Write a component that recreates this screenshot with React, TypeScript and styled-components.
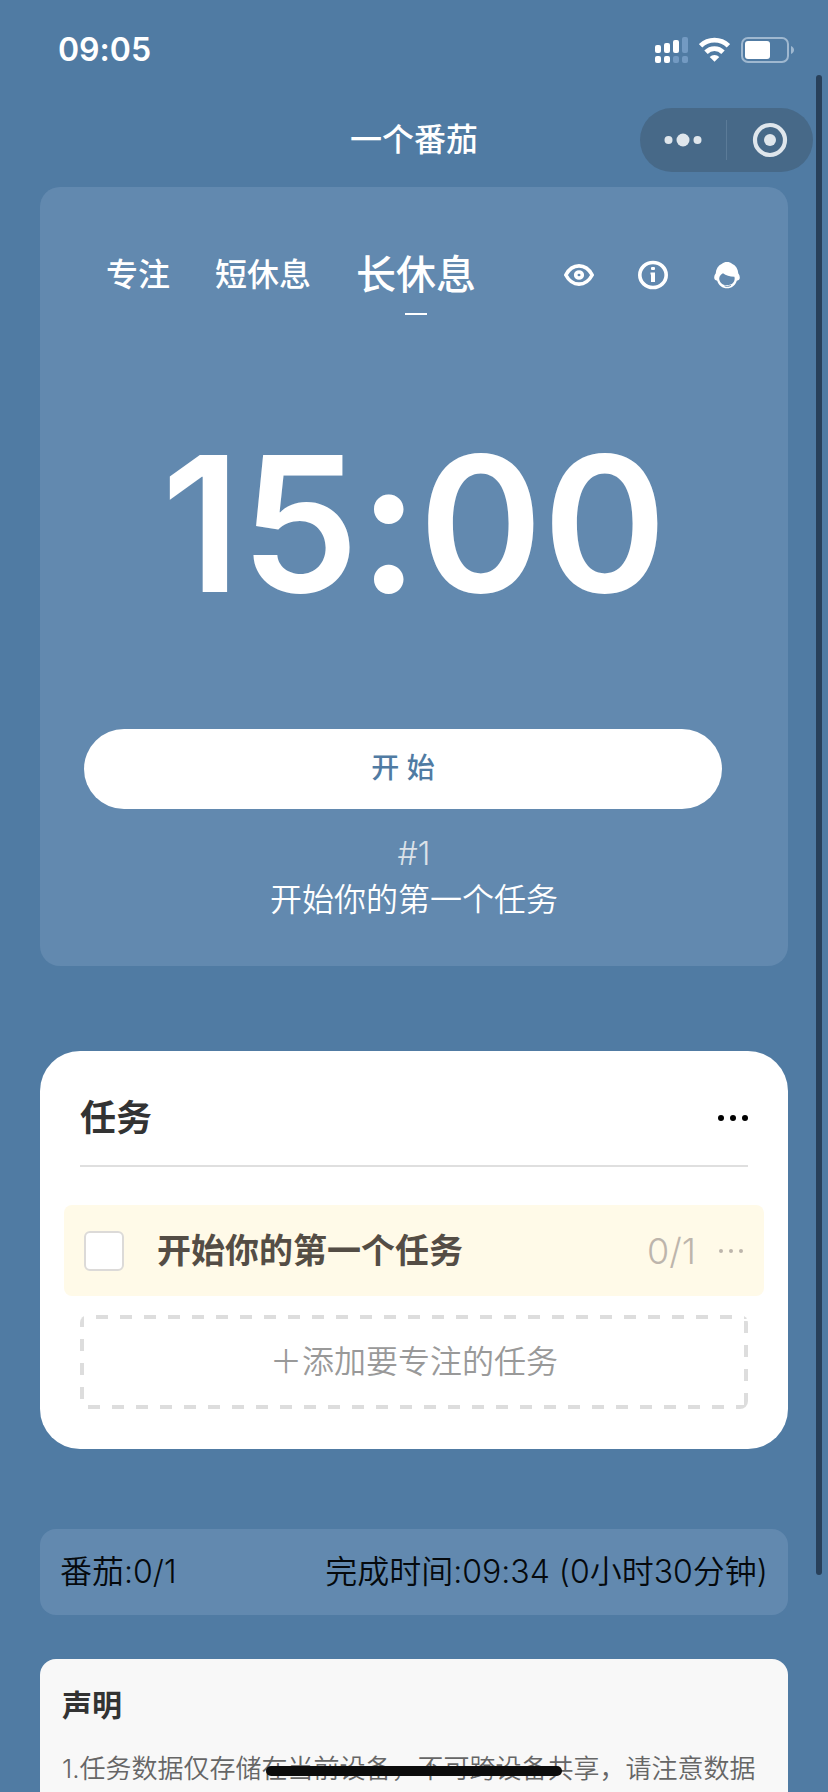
import React, { useState } from "react";
import styled, { createGlobalStyle } from "styled-components";

const GlobalStyle = createGlobalStyle`
  * { box-sizing: border-box; }
  html { scrollbar-width: none; }
  body {
    margin: 0;
    background: #507ba3;
    color: #ffffff;
    font-family: Inter, "Noto Sans CJK SC", sans-serif;
    font-size: 32px;
    font-feature-settings: "calt" 0;
    line-height: 48px;
  }
  button {
    padding: 0;
    border: 0;
    background: none;
    color: inherit;
    font: inherit;
    cursor: pointer;
  }
  h1, h2, p { margin: 0; }
  svg { display: block; }
`;

const Screen = styled.div`
  position: relative;
  height: 100vh;
  overflow: hidden;
`;

const StatusBar = styled.div`
  display: flex;
  justify-content: space-between;
  align-items: center;
  height: 100px;
  padding: 0 34px 0 58px;
`;

const Clock = styled.time`
  font-weight: 600;
`;

const StatusIcons = styled.div`
  display: flex;
  align-items: center;
  gap: 10px;
`;

const NavBar = styled.header`
  display: grid;
  grid-template-columns: 1fr auto 1fr;
  align-items: center;
  height: 80px;
  padding: 0 15px;
`;

const NavTitle = styled.h1`
  grid-column: 2;
  font-size: 32px;
  font-weight: 500;
`;

const Capsule = styled.div`
  display: flex;
  align-items: center;
  justify-self: end;
  width: 173px;
  height: 64px;
  border-radius: 32px;
  background: #476988;
`;

const CapsuleButton = styled.button`
  display: flex;
  flex: 1;
  align-items: center;
  justify-content: center;
  height: 40px;
  & + & { border-left: 1px solid #5b7b98; }
`;

const Content = styled.main`
  display: flex;
  flex-direction: column;
  padding: 7px 40px 0;
`;

const TimerCard = styled.section`
  padding: 48px 0 43px;
  border-radius: 20px;
  background: #6289af;
  text-align: center;
`;

const TimerHead = styled.div`
  display: flex;
  justify-content: space-between;
  align-items: center;
  padding: 0 46px 0 66px;
`;

const Tabs = styled.nav`
  display: flex;
  align-items: center;
  gap: 45px;
`;

const Tab = styled.button<{ $active: boolean }>`
  position: relative;
  height: 80px;
  font-size: ${(p) => (p.$active ? 40 : 32)}px;
  font-weight: 500;
  white-space: nowrap;

  &::after {
    content: "";
    display: ${(p) => (p.$active ? "block" : "none")};
    position: absolute;
    bottom: 0;
    left: 50%;
    width: 22px;
    height: 2px;
    margin-left: -11px;
    background: #ffffff;
  }
`;

const Tools = styled.div`
  display: flex;
  gap: 44px;
`;

const Countdown = styled.div`
  margin-top: 109px;
  font-size: 188px;
  font-weight: 600;
  line-height: 200px;
`;

const StartRow = styled.div`
  display: flex;
  margin: 105px 66px 22px 44px;
`;

const StartButton = styled.button`
  flex: 1;
  height: 80px;
  padding-bottom: 2px;
  border-radius: 40px;
  background: #ffffff;
  color: #507ba3;
  font-size: 28px;
  font-weight: 500;
`;

const CurrentTask = styled.p<{ $muted?: boolean }>`
  color: ${(p) => (p.$muted ? "#dbe2e9" : "#ffffff")};
  font-weight: 350;
  line-height: 46px;
`;

const TaskCard = styled.section`
  margin-top: 85px;
  padding: 40px 24px;
  border-radius: 40px;
  background: #ffffff;
`;

const TaskHead = styled.div`
  display: flex;
  justify-content: space-between;
  align-items: center;
  height: 76px;
  margin: 0 16px;
  padding-bottom: 20px;
  border-bottom: 2px solid #dfdfdf;
`;

const TaskTitle = styled.h2`
  color: #333333;
  font-size: 36px;
  font-weight: 700;
`;

const TaskRow = styled.div`
  display: flex;
  align-items: center;
  height: 91px;
  margin: 38px 0 19px;
  padding: 0 18px 0 20px;
  border-radius: 8px;
  background: #fffae8;
`;

const TaskLabel = styled.label`
  display: flex;
  flex: 1;
  align-items: center;
  gap: 33px;
  color: #544d45;
  font-size: 34px;
  font-weight: 700;
`;

const Checkbox = styled.input`
  appearance: none;
  width: 40px;
  height: 40px;
  margin: 0;
  border: 2px solid #dcdad8;
  border-radius: 6px;
  background: #ffffff;
  &:checked { background: #507ba3; }
`;

const TaskCount = styled.span`
  margin-right: 20px;
  color: #bdb5ac;
  font-size: 36px;
  font-weight: 350;
`;

const dashesX = "repeating-linear-gradient(90deg, #dddddd 0 12px, transparent 12px 24px)";
const dashesY = "repeating-linear-gradient(180deg, #dddddd 0 12px, transparent 12px 24px)";

const AddRow = styled.div`
  display: flex;
  padding: 0 16px;
`;

const AddButton = styled.button`
  flex: 1;
  height: 94px;
  border-radius: 8px;
  background:
    ${dashesX} 16px 0 / 100% 4px no-repeat,
    ${dashesX} 8px 100% / 100% 4px no-repeat,
    ${dashesY} 0 0 / 4px 100% no-repeat,
    ${dashesY} 100% 6px / 4px 100% no-repeat;
  color: #999999;
  font-weight: 350;
`;

const Summary = styled.section`
  display: flex;
  justify-content: space-between;
  align-items: center;
  height: 86px;
  margin-top: 80px;
  padding: 0 20px;
  border-radius: 16px;
  background: #6289af;
  color: #05090d;
  font-weight: 350;
  white-space: nowrap;
`;

const Notice = styled.section`
  margin-top: 44px;
  padding: 22px 22px 40px;
  border-radius: 16px;
  background: #f8f8f8;
`;

const NoticeTitle = styled.h2`
  color: #333333;
  font-size: 30px;
  font-weight: 700;
`;

const NoticeText = styled.p`
  margin-top: 16px;
  color: #666666;
  font-size: 26px;
  font-weight: 350;
`;

const ScrollThumb = styled.div`
  position: fixed;
  top: 75px;
  right: 6px;
  bottom: 217px;
  width: 6px;
  border-radius: 3px;
  background: #28405a;
`;

const HomeIndicator = styled.div`
  position: fixed;
  bottom: 16px;
  left: 50%;
  width: 296px;
  height: 10px;
  border-radius: 5px;
  background: #0c0c0c;
  transform: translateX(-50%);
`;

const SignalIcon = () => (
  <svg width="34" height="28" viewBox="0 0 34 28" fill="#ffffff" aria-hidden="true">
    <rect x="0" y="9" width="6" height="8" rx="2" />
    <rect x="9" y="7" width="6" height="10" rx="2" />
    <rect x="18" y="4" width="6" height="13" rx="2" />
    <rect x="27" y="1" width="6" height="16" rx="2" fill="#739ac2" />
    <rect x="0" y="20" width="6" height="7" rx="2" />
    <rect x="9" y="20" width="6" height="7" rx="2" />
    <rect x="18" y="20" width="6" height="7" rx="2" fill="#739ac2" />
    <rect x="27" y="20" width="6" height="7" rx="2" fill="#739ac2" />
  </svg>
);

const WifiIcon = () => (
  <svg width="31" height="26" viewBox="0 0 31 26" aria-hidden="true">
    <g fill="none" stroke="#ffffff" strokeWidth="4.8">
      <path d="M1.6 8.8a19.8 19.8 0 0 1 27.8 0" />
      <path d="M7 15.2a12 12 0 0 1 17 0" />
    </g>
    <path d="M15.5 24.8l-4.8-4.8a6.800 6.800 0 0 1 9.600 0z" fill="#ffffff" />
  </svg>
);

const BatteryIcon = () => (
  <svg width="54" height="26" viewBox="0 0 54 26" aria-hidden="true">
    <rect x="2" y="1" width="46" height="24" rx="6" fill="none" stroke="#9fb8d0" strokeWidth="2" />
    <rect x="5" y="4" width="25" height="18" rx="3" fill="#ffffff" />
    <path d="M51 9v8c4-1.500 4-6.500 0-8z" fill="#9fb8d0" />
  </svg>
);

const MenuDots = () => (
  <svg width="40" height="16" viewBox="0 0 40 16" fill="#dfe6ec" aria-hidden="true">
    <circle cx="5.500" cy="8" r="4" />
    <circle cx="20" cy="8" r="6.500" />
    <circle cx="34.500" cy="8" r="4" />
  </svg>
);

const CloseRing = () => (
  <svg width="36" height="36" viewBox="0 0 36 36" aria-hidden="true">
    <circle cx="18" cy="18" r="15" fill="none" stroke="#dfe6ec" strokeWidth="4.200" />
    <circle cx="18" cy="18" r="6" fill="#dfe6ec" />
  </svg>
);

const EyeIcon = () => (
  <svg width="30" height="30" viewBox="0 0 30 30" fill="none" stroke="#ffffff" aria-hidden="true">
    <path d="M1.800 15C5 9 9.500 5.900 15 5.900s10 3.100 13.200 9.100c-3.200 6-7.700 9.100-13.200 9.100S5 21 1.800 15z" strokeWidth="3.600" strokeLinejoin="round" />
    <ellipse cx="15" cy="15" rx="3.300" ry="3" strokeWidth="3.600" />
  </svg>
);

const InfoIcon = () => (
  <svg width="30" height="30" viewBox="0 0 30 30" aria-hidden="true">
    <ellipse cx="15" cy="15" rx="13.200" ry="12.500" fill="none" stroke="#ffffff" strokeWidth="3.600" />
    <rect x="13" y="7" width="4" height="3" rx="1" fill="#ffffff" />
    <path d="M12.500 12.500H17V22h-4v-7.500h-.5z" fill="#ffffff" />
  </svg>
);

const SupportIcon = () => (
  <svg width="30" height="30" viewBox="0 0 30 30" aria-hidden="true">
    <path
      d="M10 3.800C11.300 2.500 12.800 2 15 2s3.800.5 5 1.800c3.800 1.600 6 5 6.300 9.700 1.100 1.400 1.500 2.800 1.500 4.300 0 1.600-1 2.600-3 2.900-1.500 4.600-5.200 7.600-9.800 7.600s-8.300-3-9.800-7.600c-2-.3-3-1.300-3-2.900 0-1.500.4-2.900 1.500-4.300.3-4.700 2.500-8.100 6.300-9.700z"
      fill="#ffffff"
    />
    <path
      d="M7.200 18.500c.2-2.400 1.500-4 3.800-5.200 3 2.300 6.500 3.200 11.400 3.500.5 1.600.3 3.100-.3 4.500-1.200 2.300-3 3.500-5.300 3.700h-4c-3.200-.7-5.500-3.200-5.600-6.500z"
      fill="#6289af"
    />
    <path d="M12.500 25.800c2 .8 4.300.7 6.300-.4" fill="none" stroke="#6289af" strokeWidth="1" />
  </svg>
);

const Ellipsis = ({ color, radius, gap }: { color: string; radius: number; gap: number }) => (
  <svg width="30" height="12" viewBox="0 0 30 12" fill={color} aria-hidden="true">
    {[-1, 0, 1].map((n) => (
      <circle key={n} cx={15 + n * gap} cy="6" r={radius} />
    ))}
  </svg>
);

const MODES = [
  { name: "专注", time: "25:00" },
  { name: "短休息", time: "05:00" },
  { name: "长休息", time: "15:00" },
];

export default function App() {
  const [mode, setMode] = useState(2);

  return (
    <>
      <GlobalStyle />
      <Screen>
        <StatusBar>
          <Clock>09:05</Clock>
          <StatusIcons>
            <SignalIcon />
            <WifiIcon />
            <BatteryIcon />
          </StatusIcons>
        </StatusBar>

        <NavBar>
          <NavTitle>一个番茄</NavTitle>
          <Capsule>
            <CapsuleButton aria-label="更多"><MenuDots /></CapsuleButton>
            <CapsuleButton aria-label="关闭"><CloseRing /></CapsuleButton>
          </Capsule>
        </NavBar>

        <Content>
          <TimerCard>
            <TimerHead>
              <Tabs>
                {MODES.map((m, i) => (
                  <Tab key={m.name} $active={i === mode} onClick={() => setMode(i)}>
                    {m.name}
                  </Tab>
                ))}
              </Tabs>
              <Tools>
                <button aria-label="显示"><EyeIcon /></button>
                <button aria-label="说明"><InfoIcon /></button>
                <button aria-label="客服"><SupportIcon /></button>
              </Tools>
            </TimerHead>
            <Countdown>{MODES[mode].time}</Countdown>
            <StartRow>
              <StartButton>开 始</StartButton>
            </StartRow>
            <CurrentTask $muted>#1</CurrentTask>
            <CurrentTask>开始你的第一个任务</CurrentTask>
          </TimerCard>

          <TaskCard>
            <TaskHead>
              <TaskTitle>任务</TaskTitle>
              <button aria-label="任务菜单"><Ellipsis color="#000000" radius={3} gap={12} /></button>
            </TaskHead>
            <TaskRow>
              <TaskLabel>
                <Checkbox type="checkbox" />
                开始你的第一个任务
              </TaskLabel>
              <TaskCount>0/1</TaskCount>
              <button aria-label="编辑任务"><Ellipsis color="#bdb5ac" radius={2} gap={10} /></button>
            </TaskRow>
            <AddRow>
              <AddButton>＋添加要专注的任务</AddButton>
            </AddRow>
          </TaskCard>

          <Summary>
            <span>番茄:0/1</span>
            <span>完成时间:09:34 (0小时30分钟)</span>
          </Summary>

          <Notice>
            <NoticeTitle>声明</NoticeTitle>
            <NoticeText>1.任务数据仅存储在当前设备，不可跨设备共享，请注意数据</NoticeText>
          </Notice>
        </Content>

        <ScrollThumb />
        <HomeIndicator />
      </Screen>
    </>
  );
}
